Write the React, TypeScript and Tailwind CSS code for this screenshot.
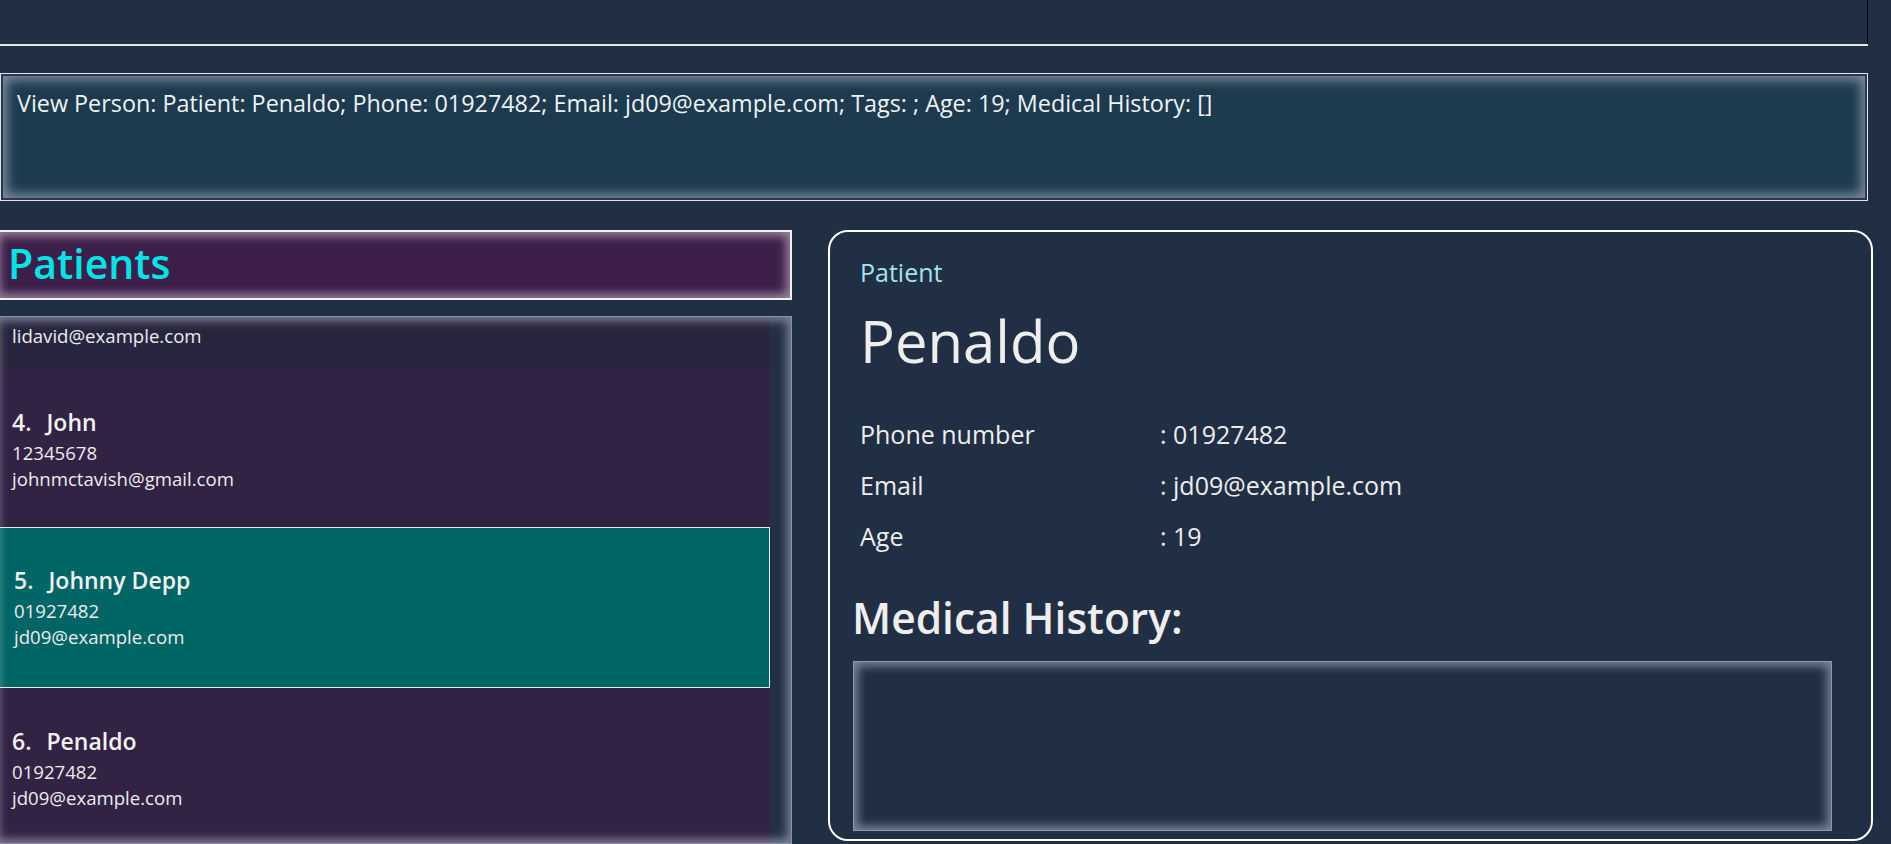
type Patient = {
  index: number;
  name: string;
  phone: string;
  email: string;
};

const patients: Patient[] = [
  { index: 4, name: "John", phone: "12345678", email: "johnmctavish@gmail.com" },
  { index: 5, name: "Johnny Depp", phone: "01927482", email: "jd09@example.com" },
  { index: 6, name: "Penaldo", phone: "01927482", email: "jd09@example.com" },
];

const PatientCard = ({ p, selected }: { p: Patient; selected: boolean }) => {
  const base = selected
    ? "h-[161px] bg-[#006565] border border-[#dfeeee] pl-[19px] pt-[37px]"
    : "h-[158px] bg-[#322244] pl-[18px] pt-[38px]";
  return (
    <div className={base}>
      <div className="flex gap-[15px] text-[23px] leading-[30px] font-semibold text-[#f2f2f2]">
        <span>{p.index}.</span>
        <span>{p.name}</span>
      </div>
      <div className="mt-[3px] text-[18.6px] leading-[26px] text-[#ececec]">{p.phone}</div>
      <div className="text-[18.6px] leading-[26px] text-[#ececec]">{p.email}</div>
    </div>
  );
};

const DetailRow = ({ label, value }: { label: string; value: string }) => (
  <div className="grid grid-cols-[300px_1fr] text-[25px] leading-[51px] text-[#ededed]">
    <span>{label}</span>
    <span>: {value}</span>
  </div>
);

export default function App() {
  return (
    <div className="w-[1891px] h-[844px] overflow-hidden bg-[#212f45] flex flex-col font-['Open_Sans',sans-serif]">
      {/* command area */}
      <div className="h-[44px] w-[1868px] border-r border-black" />
      <div className="h-[2px] w-[1868px] bg-[#e6e6e6]" />

      {/* result display */}
      <div className="mt-[27px] h-[128px] w-[1868px] border border-[#e4e4e4] bg-[#1d3a4e] pl-[16px] pt-[13px] shadow-[inset_0_0_0_2px_#2a3850,inset_0_0_12px_6px_rgba(200,212,222,0.55)]">
        <p className="text-[23.35px] leading-[32px] text-[#eef3f6]">
          View Person: Patient: Penaldo; Phone: 01927482; Email: jd09@example.com; Tags: ; Age: 19; Medical History: []
        </p>
      </div>

      <div className="mt-[29px] flex flex-1 min-h-0">
        {/* left column */}
        <div className="-ml-[6px] w-[798px] flex flex-col">
          <div className="h-[70px] border-2 border-[#f0f0f0] bg-[#3e1f4a] pl-[12px] pt-[3px] shadow-[inset_0_0_10px_4px_rgba(255,255,255,0.45)]">
            <h1 className="text-[41px] leading-[56px] font-semibold text-[#00e5e8]">Patients</h1>
          </div>

          <div className="relative mt-[16px] flex-1 min-h-0 overflow-hidden bg-[#232f46]">
            <div className="w-[776px] flex flex-col">
              {/* card scrolled partly out of view */}
              <div className="h-[78px] -mt-[25px] bg-[#28263f] pl-[18px] pt-[6px]">
                <div className="text-[18.6px] leading-[26px] text-[#ececec]">91031282</div>
                <div className="text-[18.6px] leading-[26px] text-[#ececec]">lidavid@example.com</div>
              </div>
              {patients.map((p) => (
                <PatientCard key={p.index} p={p} selected={p.index === 5} />
              ))}
            </div>
            <div className="pointer-events-none absolute inset-0 border border-[#8a93a3] shadow-[inset_0_0_10px_4px_rgba(210,215,225,0.5)]" />
          </div>
        </div>

        {/* detail card */}
        <div className="ml-[36px] mb-[3px] w-[1045px] border-2 border-white rounded-[20px] pl-[30px] pr-[38px] pt-[23px] flex flex-col">
          <div className="text-[25px] leading-[34px] text-[#a6e3e8]">Patient</div>
          <div className="mt-[17px] text-[58px] leading-[70px] font-medium text-[#eeeeee]">Penaldo</div>
          <div className="mt-[33px] flex flex-col">
            <DetailRow label="Phone number" value="01927482" />
            <DetailRow label="Email" value="jd09@example.com" />
            <DetailRow label="Age" value="19" />
          </div>
          <h2 className="-ml-[8px] mt-[29px] text-[42.5px] leading-[53px] font-semibold text-[#eeeeee]">Medical History:</h2>
          <div className="-ml-[7px] mt-[17px] h-[170px] w-[979px] border border-[#8f98a6] shadow-[inset_0_0_10px_4px_rgba(210,215,225,0.5)]" />
        </div>
      </div>
    </div>
  );
}
